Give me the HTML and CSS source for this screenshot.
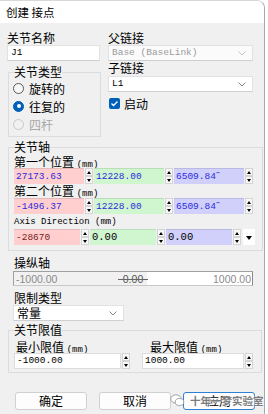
FILE: index.html
```html
<!DOCTYPE html>
<html lang="zh-CN">
<head>
    <meta charset="UTF-8">
    <title>创建 接点</title>
    <link rel="stylesheet" href="styles.css">
</head>
<body>
<div class="window">
    <div class="titlebar">创建 接点</div>
    <div class="content">
        <div class="top">
            <div class="col-left">
                <div class="label">关节名称</div>
                <div class="input name">J1</div>
                <fieldset class="group type-group">
                    <legend>关节类型</legend>
                    <div class="radio"><span class="dot"></span>旋转的</div>
                    <div class="radio checked"><span class="dot"></span>往复的</div>
                    <div class="radio disabled"><span class="dot"></span>四杆</div>
                </fieldset>
            </div>
            <div class="col-right">
                <div class="label">父链接</div>
                <div class="combo disabled">
                    <span>Base (BaseLink)</span>
                    <svg class="chevron" width="8" height="5" viewBox="0 0 8 5"><polyline points="0.5,0.5 4,4 7.5,0.5" fill="none" stroke="currentColor" stroke-width="1"/></svg>
                </div>
                <div class="label">子链接</div>
                <div class="combo child">
                    <span>L1</span>
                    <svg class="chevron" width="8" height="5" viewBox="0 0 8 5"><polyline points="0.5,0.5 4,4 7.5,0.5" fill="none" stroke="currentColor" stroke-width="1"/></svg>
                </div>
                <div class="check">
                    <span class="box"><svg width="11" height="11" viewBox="0 0 11 11"><polyline points="2.5,5.5 4.5,7.5 8.5,3.5" fill="none" stroke="#fff" stroke-width="1.3"/></svg></span>启动
                </div>
            </div>
        </div>

        <fieldset class="group axis-group">
            <legend>关节轴</legend>
            <div class="label sub first">第一个位置 <span class="unit">(mm)</span></div>
            <div class="triplet">
                <div class="cell"><div class="num red">27173.63</div><div class="spin"><i class="up"></i><i class="down"></i></div></div>
                <div class="cell"><div class="num green">12228.00</div><div class="spin"><i class="up"></i><i class="down"></i></div></div>
                <div class="cell"><div class="num blue">6509.84˝</div><div class="spin"><i class="up"></i><i class="down"></i></div></div>
            </div>
            <div class="label sub">第二个位置 <span class="unit">(mm)</span></div>
            <div class="triplet">
                <div class="cell"><div class="num red">-1496.37</div><div class="spin"><i class="up"></i><i class="down"></i></div></div>
                <div class="cell"><div class="num green">12228.00</div><div class="spin"><i class="up"></i><i class="down"></i></div></div>
                <div class="cell"><div class="num blue">6509.84˝</div><div class="spin"><i class="up"></i><i class="down"></i></div></div>
            </div>
            <div class="label sub mono">Axis Direction (mm)</div>
            <div class="triplet dir">
                <div class="cell"><div class="num red dark">-28670</div><div class="spin"><i class="up"></i><i class="down"></i></div></div>
                <div class="cell"><div class="num green black">0.00</div><div class="spin"><i class="up"></i><i class="down"></i></div></div>
                <div class="cell"><div class="num blue black">0.00</div><div class="spin"><i class="up"></i><i class="down"></i></div></div>
                <div class="drop"><i></i></div>
            </div>
        </fieldset>

        <div class="label section">操纵轴</div>
        <div class="slider">
            <span class="min">-1000.00</span>
            <span class="thumb">0.00</span>
            <span class="max">1000.00</span>
        </div>

        <div class="label section">限制类型</div>
        <div class="combo limit-type">
            <span>常量</span>
            <svg class="chevron" width="8" height="5" viewBox="0 0 8 5"><polyline points="0.5,0.5 4,4 7.5,0.5" fill="none" stroke="currentColor" stroke-width="1"/></svg>
        </div>

        <fieldset class="group limit-group">
            <legend>关节限值</legend>
            <div class="limits">
                <div class="limit min-limit">
                    <div class="label sub">最小限值 <span class="unit">(mm)</span></div>
                    <div class="spinbox"><div class="num plain">-1000.00</div><div class="spin"><i class="up"></i><i class="down"></i></div></div>
                </div>
                <div class="limit max-limit">
                    <div class="label sub">最大限值 <span class="unit">(mm)</span></div>
                    <div class="spinbox"><div class="num plain">1000.00</div><div class="spin"><i class="up"></i><i class="down"></i></div></div>
                </div>
            </div>
        </fieldset>

        <div class="buttons">
            <div class="btn">确定</div>
            <div class="btn">取消</div>
            <div class="btn default">应用</div>
        </div>
    </div>

    <div class="watermark">
        <svg width="15" height="13" viewBox="0 0 15 13"><ellipse cx="6" cy="5" rx="5.2" ry="4.2" fill="#fff" stroke="#9a9a9a" stroke-width="0.9"/><ellipse cx="9.5" cy="8" rx="4.3" ry="3.5" fill="#fff" stroke="#9a9a9a" stroke-width="0.9"/></svg>
        <span>十年一梦实验室</span>
    </div>
</div>
</body>
</html>
```

FILE: styles.css
```css
* {
    box-sizing: border-box;
}

body {
    margin: 0;
    background: #fff;
    font-family: "Noto Sans CJK SC", "Liberation Sans", sans-serif;
    font-size: 12px;
    color: #000;
}

.window {
    position: relative;
    width: 265px;
    height: 414px;
    background: #f0f0f0;
    border-right: 1px solid #a8a8a8;
    border-top: 1px solid #d8d8d8;
    border-top-right-radius: 8px;
    overflow: hidden;
}

.titlebar {
    height: 22px;
    line-height: 22px;
    padding-left: 6px;
    background: #fff;
    font-size: 11.5px;
}

.content {
    padding: 8px 1px 0 7px;
}

.label {
    height: 14px;
    line-height: 14px;
    white-space: nowrap;
}

.unit {
    font-family: "Liberation Mono", monospace;
    font-size: 9px;
}

.mono {
    font-family: "Liberation Mono", monospace;
    font-size: 9px;
}

.top {
    display: flex;
    gap: 8px;
}

.col-left {
    width: 93px;
}

.col-right {
    width: 145px;
}

.input, .combo {
    height: 16px;
    background: #fff;
    border: 1px solid #e2e2e2;
    border-bottom-color: #cfcfcf;
    font-family: "Liberation Mono", monospace;
    font-size: 9.5px;
    line-height: 14px;
    padding-left: 3px;
}

.combo {
    display: flex;
    align-items: center;
    justify-content: space-between;
    padding-right: 6px;
}

.combo .chevron {
    color: #8a8a8a;
}

.combo.disabled {
    color: #9a9a9a;
    background: #fbfbfb;
}

.combo.disabled .chevron {
    color: #c4c4c4;
}

.combo.child {
    margin-top: 1px;
}

.check {
    display: flex;
    align-items: center;
    height: 18px;
    margin-top: 2px;
    padding-left: 1px;
}

.check .box {
    width: 11px;
    height: 11px;
    border-radius: 2px;
    background: #005fb8;
    margin-right: 4px;
    display: flex;
}

.group {
    margin: 0;
    border: 1px solid #dcdcdc;
    padding: 0 7px 0 5px;
}

.group legend {
    padding: 0;
    height: 14px;
    line-height: 14px;
}

.type-group {
    margin: 4px 0 0 1px;
    width: 93px;
    padding-bottom: 3px;
}

.radio {
    display: flex;
    align-items: center;
    height: 18px;
    margin-left: -1px;
}

.radio .dot {
    width: 11px;
    height: 11px;
    border-radius: 50%;
    border: 1px solid #5a5a5a;
    background: #f7f7f7;
    margin-right: 5px;
    position: relative;
}

.radio.checked .dot {
    border-color: #005fb8;
    background: #005fb8;
}

.radio.checked .dot::after {
    content: "";
    position: absolute;
    left: 2.5px;
    top: 2.5px;
    width: 4px;
    height: 4px;
    border-radius: 50%;
    background: #fff;
}

.radio.disabled {
    color: #a8a8a8;
}

.radio.disabled .dot {
    border-color: #c8c8c8;
    background: #f0f0f0;
}

.axis-group {
    margin: 3px 0 0 1px;
    width: 254px;
    padding-bottom: 5px;
}

.label.sub {
    margin-top: 0;
}

.label.sub.first {
    height: 13px;
    line-height: 13px;
    margin-top: 1px;
}

.label.mono {
    margin-top: 1px;
}

.triplet {
    display: flex;
    height: 16px;
}

.cell {
    display: flex;
    width: 80px;
}

.triplet.dir .cell {
    width: 76px;
}

.num {
    flex: 1;
    height: 16px;
    line-height: 15px;
    padding-left: 2px;
    font-family: "Liberation Mono", monospace;
    font-size: 9.5px;
    color: #2b2bdc;
    white-space: nowrap;
    overflow: hidden;
}

.num.red {
    background: #ffcfcf;
    border-top: 1px solid #e6b9b9;
}

.num.green {
    background: #d0f6d0;
    border-top: 1px solid #b9ddb9;
}

.num.blue {
    background: #d0d0fb;
    border-top: 1px solid #b9b9e2;
}

.num.dark {
    color: #7a2020;
}

.num.black {
    color: #000;
    font-size: 10.5px;
}

.spin {
    width: 10px;
    height: 16px;
    display: flex;
    flex-direction: column;
    padding: 0 1px;
}

.spin i {
    flex: 1;
    display: flex;
    align-items: center;
    justify-content: center;
    background: #f8f8f8;
    border: 1px solid #d4d4d4;
}

.spin i::before {
    content: "";
    border-left: 2.5px solid transparent;
    border-right: 2.5px solid transparent;
}

.spin .up::before {
    border-bottom: 3px solid #000;
}

.spin .down::before {
    border-top: 3px solid #000;
}

.drop {
    width: 12px;
    margin-left: 1px;
    background: #fff;
    display: flex;
    align-items: center;
    justify-content: center;
}

.drop i {
    border-left: 3.5px solid transparent;
    border-right: 3.5px solid transparent;
    border-top: 4px solid #000;
    margin-top: 2px;
}

.label.section {
    margin-top: 5px;
    padding-left: 7px;
}

.slider {
    position: relative;
    display: flex;
    justify-content: space-between;
    align-items: center;
    width: 240px;
    height: 15px;
    margin: 1px 0 0 6px;
    border: 1px solid #a0a0a0;
    border-bottom-color: #c8c8c8;
    border-right-color: #8a8a8a;
    background: linear-gradient(to right, #f1f1f1 56%, #fff 56%);
    font-family: "Liberation Sans", sans-serif;
    font-size: 10.5px;
    color: #8a8a8a;
    padding: 0 1px 0 2px;
}

.slider .thumb {
    position: absolute;
    left: 104px;
    width: 30px;
    text-align: center;
    color: #555;
}

.slider .thumb::after {
    content: "";
    position: absolute;
    left: 0;
    right: 0;
    top: 6px;
    border-top: 1px solid #666;
}

.label.section + .combo {
    margin-left: 6px;
}

.limit-type {
    width: 111px;
    font-family: "Noto Sans CJK SC", sans-serif;
    font-size: 12px;
    padding-left: 3px;
}

.limit-group {
    margin: 2px 0 0 1px;
    width: 254px;
    padding-bottom: 3px;
}

.limits {
    display: flex;
    gap: 11px;
    margin-top: 3px;
}

.limit .label.sub {
    height: 13px;
    line-height: 13px;
    padding-left: 2px;
}

.min-limit {
    width: 117px;
}

.max-limit {
    width: 112px;
}

.max-limit .label.sub {
    padding-left: 8px;
}

.spinbox {
    display: flex;
    height: 16px;
}

.num.plain {
    background: #fff;
    color: #000;
    border: 1px solid #dcdcdc;
    line-height: 14px;
}

.buttons {
    display: flex;
    gap: 12px;
    margin: 19px 0 0 8px;
}

.btn {
    width: 72px;
    height: 18px;
    line-height: 16px;
    text-align: center;
    background: #fdfdfd;
    border: 1px solid #d0d0d0;
    border-radius: 3px;
}

.btn.default {
    border: 1.5px solid #2f7fd6;
    line-height: 15px;
}

.watermark {
    position: absolute;
    left: 170px;
    top: 392px;
    display: flex;
    align-items: center;
    gap: 5px;
    color: #7c7c7c;
    font-size: 10.5px;
    font-weight: bold;
    text-shadow: 0 0 2px #fff, 0 0 2px #fff;
}
```
